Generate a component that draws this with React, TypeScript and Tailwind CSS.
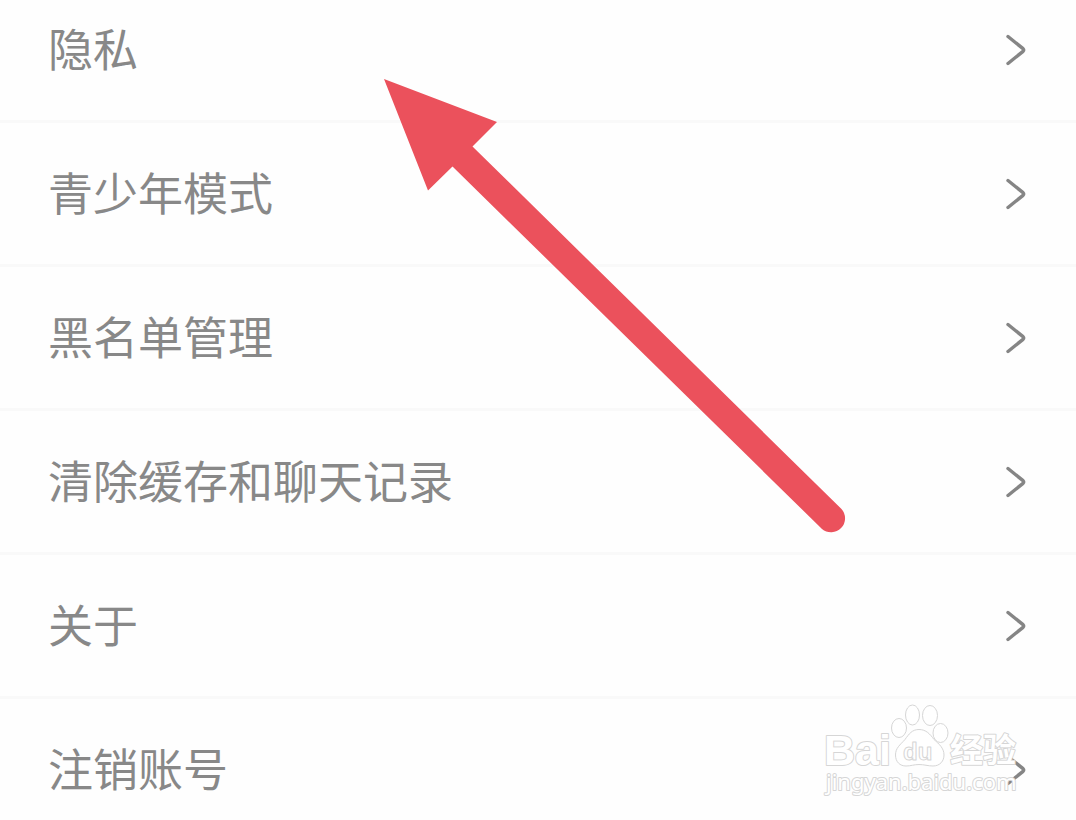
interface SettingsRowProps {
  label: string;
}

const items = ["隐私", "青少年模式", "黑名单管理", "清除缓存和聊天记录", "关于", "注销账号"];

function ChevronIcon() {
  return (
    <svg viewBox="0 0 20 32" className="h-8 w-5 shrink-0" fill="none" aria-hidden="true">
      <path
        d="M2 2.5 17 14.6Q18.3 16 17 17.4L2 29.5"
        stroke="#858585"
        strokeWidth="3.4"
        strokeLinecap="round"
      />
    </svg>
  );
}

function SettingsRow({ label }: SettingsRowProps) {
  return (
    <li className="border-b-3 border-[#f9f9f9]">
      <button type="button" className="flex h-[141px] w-full items-center justify-between pl-12 pr-[50px] text-left">
        <span className="pb-1 text-[45px] leading-[60px] text-[#888888]">{label}</span>
        <ChevronIcon />
      </button>
    </li>
  );
}

function PointerArrow() {
  return (
    <svg
      viewBox="0 0 464 456"
      className="pointer-events-none absolute left-[383px] top-[78px] h-[456px] w-[464px]"
      aria-hidden="true"
    >
      <path
        d="M1 1 114 44 89.5 68.5 458.5 431A14 14 0 0 1 439 451L69.5 88.5 45 112.5Z"
        fill="#eb515c"
      />
    </svg>
  );
}

function Watermark() {
  return (
    <svg
      viewBox="0 0 204 100"
      className="pointer-events-none absolute bottom-5 right-[52px] h-[100px] w-[204px]"
      fill="#ffffff"
      stroke="#d6d6d6"
      strokeLinejoin="round"
    >
      <ellipse cx="79" cy="28" rx="7.5" ry="9.5" />
      <ellipse cx="92.5" cy="15" rx="7" ry="10" />
      <ellipse cx="110" cy="15.5" rx="7.5" ry="10" />
      <ellipse cx="120.5" cy="33" rx="7.5" ry="9.5" />
      <path d="M99 29.5C92 29.5 89 34 85 39.5C80 45 75.5 48 75.5 55C75.5 62 80 66 86 66C91 66 94 64.5 99 64.500C104 64.5 108 66 113 66C120 66 124 61 124 55C124 48 119 44 114 39.5C110 34 106 29.5 99 29.5Z" />
      <text
        x="4"
        y="65"
        strokeWidth="2"
        className="font-['Liberation_Sans'] text-[43px] font-bold [paint-order:stroke]"
      >
        Bai
      </text>
      <text x="83" y="60" className="font-['Liberation_Sans'] text-[24px] font-bold">
        du
      </text>
      <text
        x="130"
        y="62"
        strokeWidth="2"
        className="font-['Noto_Sans_CJK_SC'] text-[33px] font-bold [paint-order:stroke]"
      >
        经验
      </text>
      <text x="6" y="90" strokeWidth="2" className="font-['Noto_Sans'] text-[22px] [paint-order:stroke]">
        jingyan.baidu.com
      </text>
    </svg>
  );
}

export default function App() {
  return (
    <main
      lang="zh-CN"
      className="relative h-screen overflow-hidden bg-[#fefefe] font-['Noto_Sans_CJK_SC',sans-serif]"
    >
      {/* list is scrolled, the first row starts above the fold */}
      <ul className="-mt-[21px]">
        {items.map((label) => (
          <SettingsRow key={label} label={label} />
        ))}
      </ul>
      <Watermark />
      <PointerArrow />
    </main>
  );
}
